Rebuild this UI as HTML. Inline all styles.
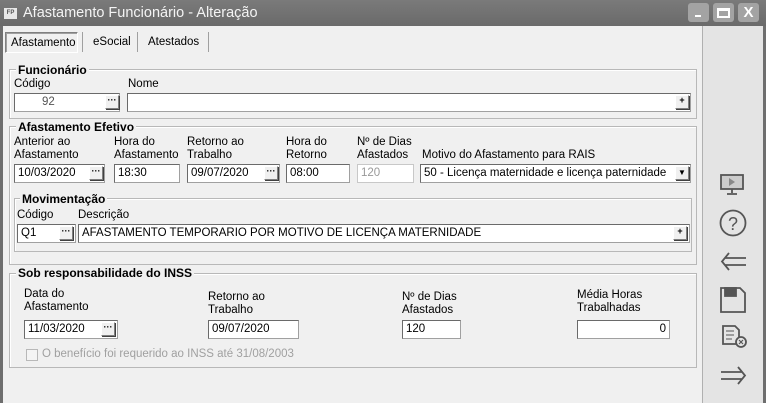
<!DOCTYPE html><html><head><meta charset="utf-8"><style>
*{box-sizing:border-box;margin:0;padding:0}
body{width:766px;height:403px;overflow:hidden;background:#f0f0f0;font-family:"Liberation Sans",sans-serif;font-size:11.5px;color:#000;position:relative}
.a{position:absolute;white-space:nowrap}
.tb{left:0;top:0;width:766px;height:26px;background:linear-gradient(#7a7a7a,#6a6a6a)}
.wb{background:#6e6e6e}
.in{position:absolute;background:#fff;border:1px solid #a0a0a0;border-top-color:#6a6a6a;border-left-color:#6a6a6a;height:19px;padding:2px 3px;line-height:13px;white-space:nowrap}
.bt{position:absolute;width:14px;height:14px;background:#f0f0f0;border:1px solid #808080;border-top-color:#fff;border-left-color:#fff;box-shadow:1px 1px 0 #404040;font-size:9px;line-height:8px;text-align:center;font-weight:bold}
.gb{position:absolute;border:1px solid #b8b8b8;box-shadow:inset 1px 1px 0 #fff}
.gt{position:absolute;font-weight:bold;background:#f0f0f0;padding:0 2px;font-size:12px;line-height:13px}
.wbtn{position:absolute;top:3px;width:21px;height:19px;background:#a3a3a3;border-radius:3px}
</style></head><body>
<div class="a tb"></div>
<div class="a" style="left:4px;top:8px;width:13px;height:11px;background:#e8e8e8;color:#555;font-size:6px;line-height:11px;text-align:center;font-weight:bold">FP</div>
<div class="a" style="left:23px;top:5px;color:#f4f4f4;font-size:14.5px">Afastamento Funcionário - Alteração</div>
<div class="wbtn" style="left:688px"><div class="a" style="left:7px;top:12px;width:6px;height:2px;background:#fff"></div></div>
<div class="wbtn" style="left:713px"><div class="a" style="left:4px;top:5px;width:13px;height:10px;border:2px solid #fff;border-top-width:3px"></div></div>
<div class="wbtn" style="left:738px;color:#fff;font-weight:bold;font-size:15px;text-align:center;line-height:19px">X</div>
<div class="a wb" style="left:0;top:26px;width:3px;height:377px"></div>
<div class="a wb" style="left:763px;top:26px;width:3px;height:377px"></div>
<div class="a" style="left:702px;top:26px;width:61px;height:377px;background:#e4e4e4;border-left:1px solid #b0b0b0"></div>
<!-- tabs -->
<div class="a" style="left:5px;top:32px;width:73px;height:21px;border:1px solid #808080;border-right-color:#fff;border-bottom-color:#fff;box-shadow:inset 1px 1px 0 #a0a0a0"></div>
<div class="a" style="left:11px;top:37px">Afastamento</div>
<div class="a" style="left:82px;top:32px;width:1px;height:20px;background:#a0a0a0"></div>
<div class="a" style="left:93px;top:36px">eSocial</div>
<div class="a" style="left:137px;top:32px;width:1px;height:20px;background:#a0a0a0"></div>
<div class="a" style="left:148px;top:36px">Atestados</div>
<div class="a" style="left:208px;top:32px;width:1px;height:20px;background:#a0a0a0"></div>
<!-- Funcionario -->
<div class="gb" style="left:9px;top:69px;width:688px;height:50px"></div>
<div class="gt" style="left:16px;top:64px">Funcionário</div>
<div class="a" style="left:14px;top:78px">Código</div>
<div class="in" style="left:14px;top:93px;width:106px;color:#555;padding-left:27px">92</div>
<div class="bt" style="left:105px;top:95px">···</div>
<div class="a" style="left:128px;top:78px">Nome</div>
<div class="in" style="left:127px;top:93px;width:564px"></div>
<div class="bt" style="left:675px;top:95px">+</div>
<!-- Efetivo -->
<div class="gb" style="left:9px;top:126px;width:688px;height:139px"></div>
<div class="gt" style="left:16px;top:121px">Afastamento Efetivo</div>
<div class="a" style="left:14px;top:136px;line-height:13px">Anterior ao<br>Afastamento</div>
<div class="a" style="left:114px;top:136px;line-height:13px">Hora do<br>Afastamento</div>
<div class="a" style="left:187px;top:136px;line-height:13px">Retorno ao<br>Trabalho</div>
<div class="a" style="left:286px;top:136px;line-height:13px">Hora do<br>Retorno</div>
<div class="a" style="left:357px;top:136px;line-height:13px">Nº de Dias<br>Afastados</div>
<div class="a" style="left:422px;top:149px">Motivo do Afastamento para RAIS</div>
<div class="in" style="left:14px;top:164px;width:91px">10/03/2020</div><div class="bt" style="left:89px;top:166px">···</div>
<div class="in" style="left:114px;top:164px;width:66px">18:30</div>
<div class="in" style="left:187px;top:164px;width:93px">09/07/2020</div><div class="bt" style="left:264px;top:166px">···</div>
<div class="in" style="left:286px;top:164px;width:64px">08:00</div>
<div class="in" style="left:357px;top:164px;width:57px;color:#999;border-color:#c8c8c8">120</div>
<div class="in" style="left:420px;top:164px;width:271px">50 - Licença maternidade e licença paternidade</div>
<div class="bt" style="left:675px;top:166px;font-size:8px;line-height:11px">▼</div>
<!-- Movimentacao -->
<div class="gb" style="left:14px;top:198px;width:678px;height:54px"></div>
<div class="gt" style="left:20px;top:193px">Movimentação</div>
<div class="a" style="left:17px;top:209px">Código</div>
<div class="a" style="left:78px;top:209px">Descrição</div>
<div class="in" style="left:17px;top:224px;width:59px">Q1</div><div class="bt" style="left:59px;top:226px">···</div>
<div class="in" style="left:78px;top:224px;width:612px">AFASTAMENTO TEMPORARIO POR MOTIVO DE LICENÇA MATERNIDADE</div>
<div class="bt" style="left:673px;top:226px">+</div>
<!-- INSS -->
<div class="gb" style="left:9px;top:273px;width:688px;height:95px"></div>
<div class="gt" style="left:16px;top:267px">Sob responsabilidade do INSS</div>
<div class="a" style="left:24px;top:288px;line-height:13px">Data do<br>Afastamento</div>
<div class="a" style="left:208px;top:291px;line-height:13px">Retorno ao<br>Trabalho</div>
<div class="a" style="left:402px;top:291px;line-height:13px">Nº de Dias<br>Afastados</div>
<div class="a" style="left:577px;top:289px;line-height:13px">Média Horas<br>Trabalhadas</div>
<div class="in" style="left:24px;top:320px;width:94px">11/03/2020</div><div class="bt" style="left:101px;top:322px">···</div>
<div class="in" style="left:208px;top:320px;width:91px">09/07/2020</div>
<div class="in" style="left:402px;top:320px;width:59px">120</div>
<div class="in" style="left:577px;top:320px;width:93px;text-align:right">0</div>
<div class="a" style="left:26px;top:349px;width:12px;height:12px;border:1px solid #b8b8b8;background:#f4f4f4"></div>
<div class="a" style="left:42px;top:348px;color:#a0a0a0">O benefício foi requerido ao INSS até 31/08/2003</div>
<!-- sidebar icons -->
<svg class="a" style="left:718px;top:172px" width="32" height="220" viewBox="0 0 32 220" fill="none" stroke="#555" stroke-width="1.8">
<rect x="3" y="3" width="22" height="14" fill="#ccc"/><path d="M11 6l6 4-6 4z" fill="#888" stroke="none"/><path d="M14 17v4M9 22h10"/>
<circle cx="15" cy="51" r="12.5"/><text x="15" y="58" font-size="18" text-anchor="middle" fill="#555" stroke="none" font-family="Liberation Sans">?</text>
<path d="M28 86H7M28 93H7M11 81l-7 8.5 7 8.5"/>
<path d="M3 116h19l5 5v19H3z"/><rect x="7" y="116" width="11" height="8" fill="#555"/>
<path d="M5 154h12l4 4v14H5z"/><path d="M8 159h8M8 163h8M8 167h6" stroke-width="1"/><circle cx="23" cy="170" r="5" fill="#e4e4e4"/><path d="M21 168l4 4M25 168l-4 4" stroke-width="1.2"/>
<path d="M3 200h21M3 207h21M20 195l7 8.5-7 8.5"/>
</svg>
</body></html>
